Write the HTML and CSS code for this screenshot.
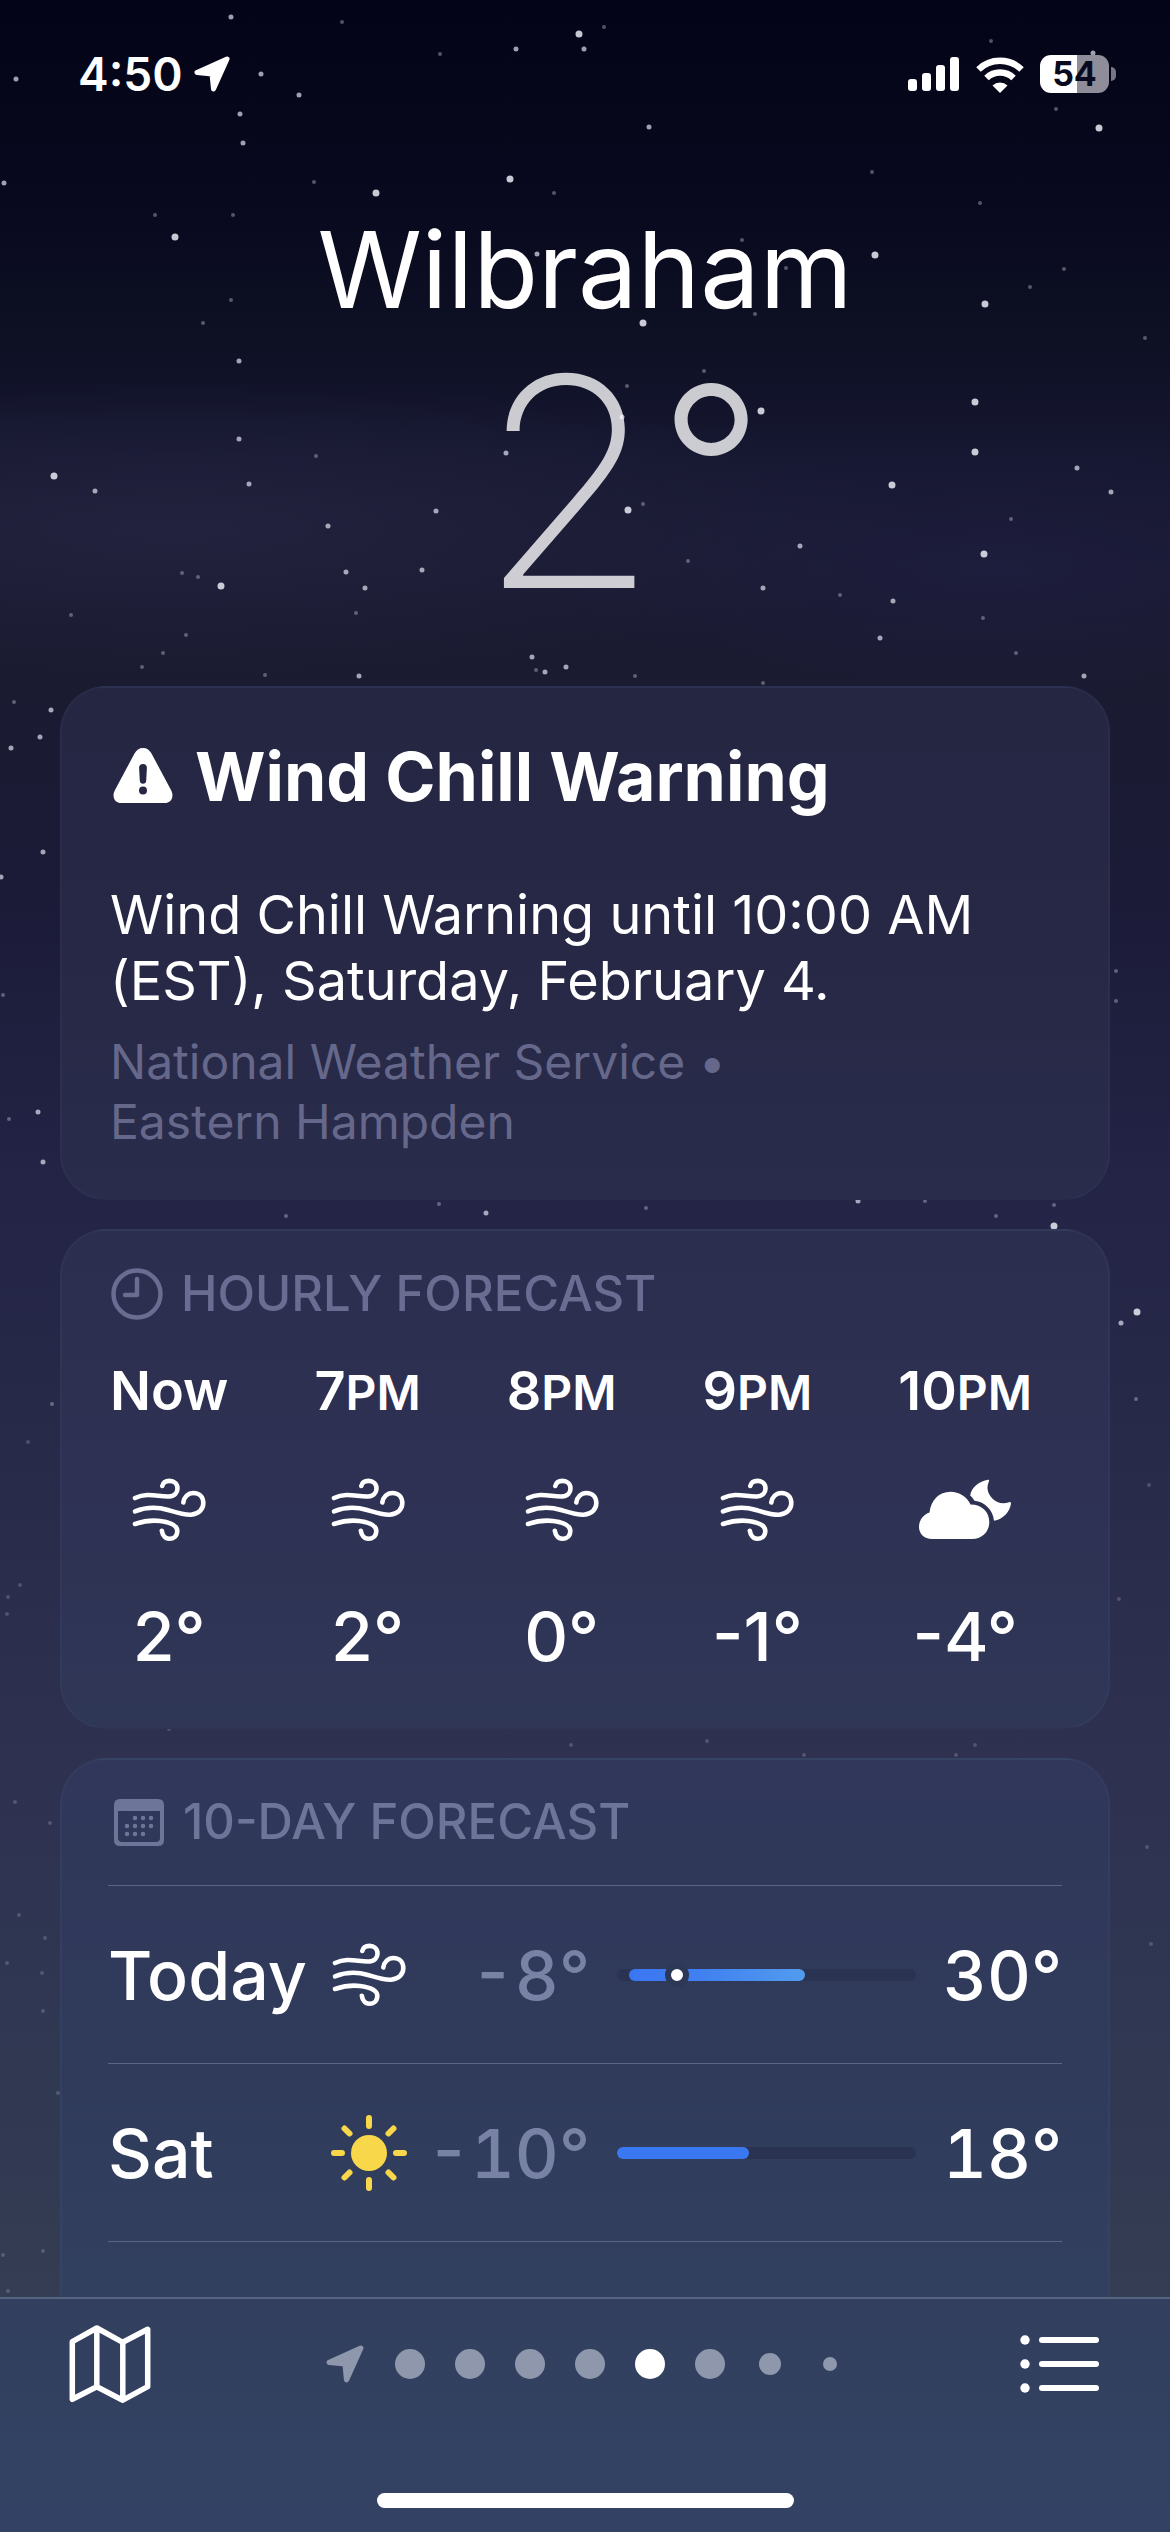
FILE: index.html
```html
<!DOCTYPE html>
<html lang="en">
<head>
    <meta charset="UTF-8">
    <meta name="viewport" content="width=device-width, initial-scale=1.0">
    <title>Weather</title>
    <link rel="stylesheet" href="styles.css">
</head>
<body>
    <!-- shared icons -->
    <svg class="sprite" aria-hidden="true">
        <symbol id="wind" viewBox="0 0 74 64">
            <g fill="none" stroke="currentColor" stroke-width="4.6" stroke-linecap="round" stroke-linejoin="round">
                <path d="M3 20C16 14 26 19 37 18.5C43 18 45.5 14 45.5 10.5C45.5 6 42 2.9 37.5 2.9C33.5 2.9 31 5 30.3 8"/>
                <path d="M3 33.3C14 29 26 29 36 32C46 35 52 37 59 36.7C67 36 71.3 31 71.3 25.3C71.3 19 67.5 15 61.5 15C56 15 52.3 19 51.3 24.5"/>
                <path d="M3 46C12 43 20 42 28 43C40 44.5 45.3 48 45.3 53C45.3 58 41.5 60.8 37.3 60.8C33 60.8 30.5 57 29.8 52.7"/>
            </g>
        </symbol>
        <symbol id="arrow" viewBox="0 0 38 38">
            <path d="M34 4L4 17.5L19 19L20.5 34Z" fill="currentColor" stroke="currentColor" stroke-width="5" stroke-linejoin="round"/>
        </symbol>
    </svg>

    <svg class="stars" viewBox="0 0 1170 2532" preserveAspectRatio="xMidYMin slice" aria-hidden="true">
        <path class="star-big" d="M579 34h0M376 193h0M510 179h0M175 237h0M875 255h0M985 304h0M643 323h0M761 411h0M975 402h0M975 452h0M54 476h0M892 485h0M628 510h0M984 554h0M221 586h0M1099 128h0M1054 1226h0M1137 1312h0"/>
        <path class="star-mid" d="M231 17h0M516 49h0M584 49h0M16 79h0M261 74h0M299 95h0M240 114h0M243 143h0M649 127h0M1093 53h0M4 183h0M537 254h0M239 361h0M622 417h0M239 439h0M506 453h0M1077 468h0M1111 492h0M95 491h0M249 484h0M436 511h0M328 526h0M800 546h0M346 572h0M422 570h0M365 588h0M763 588h0M893 601h0M880 638h0M532 657h0M359 676h0M545 672h0M566 667h0M1084 676h0M51 710h0M40 737h0M11 748h0M43 852h0M1 877h0M38 1112h0M43 1162h0M486 1213h0M858 1201h0M1121 1323h0"/>
        <path class="star-small" d="M342 22h0M604 27h0M440 54h0M991 41h0M1056 109h0M872 172h0M314 182h0M554 193h0M980 203h0M155 215h0M233 215h0M742 240h0M1064 269h0M1030 287h0M786 268h0M755 314h0M231 300h0M203 323h0M1145 338h0M704 371h0M627 386h0M316 456h0M643 504h0M1011 519h0M198 577h0M182 573h0M688 561h0M840 595h0M356 613h0M983 618h0M186 635h0M163 653h0M1016 653h0M71 615h0M142 667h0M265 675h0M536 670h0M635 676h0M763 683h0M14 702h0M1116 971h0M1116 1001h0M3 995h0M9 1119h0M439 1204h0M286 1216h0M646 1208h0M925 1201h0M1054 1205h0M996 1216h0M52 1404h0M1136 1399h0"/>
        <path class="star-faint" d="M28 1442h0M1149 1485h0M20 1585h0M8 1597h0M7 1614h0M1119 1599h0M169 1729h0M571 1745h0M707 1741h0M975 1745h0M804 1755h0M956 1755h0M1147 1847h0M15 1802h0M50 1823h0M19 1915h0M45 1938h0M7 1963h0M42 1973h0M43 2011h0M58 2093h0M1151 1944h0M3 2255h0M43 2251h0M8 2291h0"/>
    </svg>

    <div class="app">
        <div class="status-bar">
            <div class="status-left">
                <span>4:50</span>
                <svg class="status-arrow"><use href="#arrow"/></svg>
            </div>
            <div class="status-right">
                <svg class="signal" viewBox="0 0 52 36">
                    <g fill="#fff">
                        <rect x="0" y="23" width="9" height="12" rx="3"/>
                        <rect x="14" y="17" width="9" height="18" rx="3"/>
                        <rect x="28" y="9" width="9" height="26" rx="3"/>
                        <rect x="42" y="1" width="9" height="34" rx="3"/>
                    </g>
                </svg>
                <svg class="wifi" viewBox="0 0 50 37">
                    <g fill="none" stroke="#fff" stroke-width="6.5">
                        <path d="M3.5 13.5A31 31 0 0 1 46.5 13.5"/>
                        <path d="M11.5 22A19.5 19.5 0 0 1 38.5 22"/>
                    </g>
                    <path d="M25 37L17.5 29.5A11 11 0 0 1 32.5 29.5Z" fill="#fff"/>
                </svg>
                <div class="battery">
                    <span class="battery-level">54</span>
                </div>
            </div>
        </div>

        <main class="content">
            <header class="location">
                <h1 class="city">Wilbraham</h1>
                <div class="current-temp">2<span class="degree">°</span></div>
            </header>

            <section class="card alert">
                <h2 class="alert-title">
                    <svg class="warning" viewBox="0 0 60 56">
                        <path fill="#fff" fill-rule="evenodd" d="M30 0C34 0 36.5 2 38.5 5.5L58 42C61.5 48.5 58.5 55 51.5 55H8.5C1.5 55-1.5 48.5 2 42L21.5 5.5C23.5 2 26 0 30 0ZM30 16C27.5 16 26 17.7 26.1 20L26.8 32.5C26.9 34.7 28 35.8 30 35.8C32 35.8 33.1 34.7 33.2 32.5L33.9 20C34 17.7 32.5 16 30 16ZM30 38.5A4 4 0 1 0 30 46.5A4 4 0 1 0 30 38.5Z"/>
                    </svg>
                    Wind Chill Warning
                </h2>
                <p class="alert-text">Wind Chill Warning until 10:00 AM (EST), Saturday, February 4.</p>
                <p class="alert-source">National Weather Service •<br>Eastern Hampden</p>
            </section>

            <section class="card hourly">
                <h2 class="card-title">
                    <svg class="title-icon" viewBox="0 0 54 54">
                        <g fill="none" stroke="currentColor" stroke-width="4.5" stroke-linecap="round" stroke-linejoin="round">
                            <circle cx="27" cy="27" r="23.5"/>
                            <path d="M27 12V28H15"/>
                        </g>
                    </svg>
                    HOURLY FORECAST
                </h2>
                <div class="hours">
                    <div class="hour">
                        <span class="hour-time">Now</span>
                        <svg class="wind"><use href="#wind"/></svg>
                        <span class="hour-temp">2°</span>
                    </div>
                    <div class="hour">
                        <span class="hour-time">7<small>PM</small></span>
                        <svg class="wind"><use href="#wind"/></svg>
                        <span class="hour-temp">2°</span>
                    </div>
                    <div class="hour">
                        <span class="hour-time">8<small>PM</small></span>
                        <svg class="wind"><use href="#wind"/></svg>
                        <span class="hour-temp">0°</span>
                    </div>
                    <div class="hour">
                        <span class="hour-time">9<small>PM</small></span>
                        <svg class="wind"><use href="#wind"/></svg>
                        <span class="hour-temp">-1°</span>
                    </div>
                    <div class="hour">
                        <span class="hour-time">10<small>PM</small></span>
                        <svg class="cloud-moon" viewBox="0 0 94 64">
                            <g fill="#fff">
                                <path d="M14 61C6 61 1 55.5 1 49C1 42 5.5 36.5 11.5 34.5C13 22 21 13.7 32.5 13.7C41 13.7 49 18.5 52.5 26.5C64 26.5 71.3 34 71.3 44C71.3 54 64 61 54 61Z"/>
                                <path d="M70.3 1.7C61 3 53 9.5 52.2 17.5C54 19 55.5 21 56.5 22.8C67 24 75 32 76 42.8C85 41.5 92 33.5 93 25.5C93 24 92 23.6 91 24.2C80 28.5 70 19 69.5 10.5C69.3 7 70.5 5 71 3C71.3 2 71 1.6 70.3 1.7Z"/>
                            </g>
                        </svg>
                        <span class="hour-temp">-4°</span>
                    </div>
                </div>
            </section>

            <section class="card daily">
                <h2 class="card-title">
                    <svg class="title-icon" viewBox="0 0 54 54">
                        <path fill="currentColor" fill-rule="evenodd" d="M8 4H46Q52 4 52 10V45Q52 51 46 51H8Q2 51 2 45V10Q2 4 8 4ZM6 16V43Q6 47 10 47H44Q48 47 48 43V16Z"/>
                        <path fill="none" stroke="currentColor" stroke-width="4.5" stroke-linecap="round" d="M23 23h0M31 23h0M39 23h0M15 31h0M23 31h0M31 31h0M39 31h0M15 39h0M23 39h0M31 39h0"/>
                    </svg>
                    10-DAY FORECAST
                </h2>
                <ul class="days">
                    <li class="day">
                        <span>Today</span>
                        <svg class="wind"><use href="#wind"/></svg>
                        <span class="low">-8°</span>
                        <span class="range">
                            <span class="range-fill warm" style="margin-left: 4%; width: 59%"></span>
                            <span class="range-now" style="left: 20%"></span>
                        </span>
                        <span class="high">30°</span>
                    </li>
                    <li class="day">
                        <span>Sat</span>
                        <svg class="sun" viewBox="0 0 78 78">
                            <circle cx="39" cy="39" r="18" fill="#f8d74a"/>
                            <path stroke="#f8d74a" stroke-width="6" stroke-linecap="round" d="M39 4V12M39 66V74M4 39H12M66 39H74M14.5 14.5L19.5 19.5M58.5 58.5L63.5 63.5M14.5 63.5L19.5 58.5M58.5 19.5L63.5 14.5"/>
                        </svg>
                        <span class="low">-10°</span>
                        <span class="range">
                            <span class="range-fill" style="width: 44%"></span>
                        </span>
                        <span class="high">18°</span>
                    </li>
                </ul>
            </section>
        </main>

        <footer class="tab-bar">
            <div class="tabs">
                <button class="tab" type="button" aria-label="Map">
                    <svg class="map" viewBox="0 0 81 78">
                        <path fill="none" stroke="#fff" stroke-width="5.5" stroke-linejoin="round" d="M2.8 16.7L27.3 3L53.3 17.3L78.2 4.3V61.7L53.3 75.2L27.3 61.7L2.8 74.3ZM27.3 3V61.7M53.3 17.3V75.2"/>
                    </svg>
                </button>
                <div class="pages">
                    <svg class="page-arrow"><use href="#arrow"/></svg>
                    <span class="dot"></span>
                    <span class="dot"></span>
                    <span class="dot"></span>
                    <span class="dot"></span>
                    <span class="dot active"></span>
                    <span class="dot"></span>
                    <span class="dot medium"></span>
                    <span class="dot small"></span>
                </div>
                <button class="tab" type="button" aria-label="Locations">
                    <svg class="list" viewBox="0 0 80 60">
                        <path fill="none" stroke="#fff" stroke-width="6" stroke-linecap="round" d="M22 6H76M22 30H76M22 54H76"/>
                        <g fill="#fff">
                            <circle cx="5" cy="6" r="4.7"/>
                            <circle cx="5" cy="30" r="4.7"/>
                            <circle cx="5" cy="54" r="4.7"/>
                        </g>
                    </svg>
                </button>
            </div>
            <div class="home-indicator"></div>
        </footer>
    </div>
</body>
</html>
```

FILE: styles.css
```css
* {
    box-sizing: border-box;
}

body {
    margin: 0;
    font-family: Inter, "Liberation Sans", sans-serif;
    color: #fff;
    background:
        radial-gradient(ellipse 65% 150px at 15% 530px, rgba(38, 37, 66, 0.8), rgba(34, 33, 64, 0)),
        radial-gradient(ellipse 40% 130px at 85% 570px, rgba(31, 31, 66, 0.7), rgba(31, 31, 66, 0)),
        linear-gradient(#040418 0, #08091e 200px, #0e1024 340px, #161731 460px, #1a1a30 660px, #1b1b38 900px, #232446 1180px, #282a49 1450px, #2e3050 1720px, #2f3752 2000px, #343d53 2300px);
    background-color: #334060;
}

h1, h2, p, ul {
    margin: 0;
    padding: 0;
    font-weight: 400;
}

.sprite {
    position: absolute;
    width: 0;
    height: 0;
}

/* night sky */
.stars {
    position: absolute;
    top: 0;
    left: 0;
    width: 100%;
    height: 100vh;
    z-index: -1;
    fill: none;
    stroke-linecap: round;
}

.star-big { stroke: rgba(235, 235, 245, 0.85); stroke-width: 7; }
.star-mid { stroke: rgba(225, 225, 240, 0.7); stroke-width: 5; }
.star-small { stroke: rgba(200, 200, 220, 0.4); stroke-width: 4; }
.star-faint { stroke: rgba(190, 195, 215, 0.25); stroke-width: 4; }

.app {
    display: flex;
    flex-direction: column;
    height: 100vh;
}

/* status bar */
.status-bar {
    display: flex;
    justify-content: space-between;
    align-items: center;
    height: 148px;
    padding: 0 54px 0 78px;
}

.status-left {
    display: flex;
    align-items: center;
    gap: 10px;
    font-size: 46px;
    font-weight: 600;
}

.status-arrow {
    width: 38px;
    height: 38px;
}

.status-right {
    display: flex;
    align-items: center;
    gap: 15px;
}

.signal { width: 52px; height: 36px; }
.wifi { width: 50px; height: 37px; }

.battery {
    position: relative;
    width: 69px;
    height: 38px;
    margin-right: 7px;
    border-radius: 11px;
    background: linear-gradient(90deg, #fff 54%, #8e8d99 54%);
    text-align: center;
}

.battery::after {
    content: "";
    position: absolute;
    top: 12px;
    right: -7px;
    width: 5px;
    height: 14px;
    border-radius: 0 7px 7px 0;
    background: #777683;
}

.battery-level {
    font-size: 34px;
    line-height: 38px;
    font-weight: 700;
    color: #0a0a1e;
}

/* main column */
.content {
    flex: 1;
    min-height: 0;
    display: flex;
    flex-direction: column;
    gap: 29px;
    padding: 0 60px;
    overflow: hidden;
}

.location {
    height: 509px;
    padding-top: 52px;
    text-align: center;
}

.city {
    font-size: 106px;
    line-height: 140px;
}

.current-temp {
    padding-left: 72px;
    font-size: 292px;
    line-height: 284px;
    font-weight: 250;
    color: rgba(255, 255, 255, 0.78);
}

.degree {
    font-size: 230px;
    line-height: 0;
    font-weight: 300;
    vertical-align: 36px;
}

.card {
    padding: 0 48px;
    border: 2px solid rgba(120, 130, 190, 0.06);
    border-radius: 46px;
}

/* weather alert */
.alert {
    height: 514px;
    padding-top: 44px;
    background: linear-gradient(#252642, #272846 50%, #292c4b);
}

.alert-title {
    display: flex;
    align-items: center;
    gap: 22px;
    padding-left: 3px;
    font-size: 68px;
    line-height: 88px;
    font-weight: 700;
}

.warning {
    width: 60px;
    height: 56px;
}

.alert-text {
    margin-top: 62px;
    font-size: 54px;
    line-height: 66px;
}

.alert-source {
    margin-top: 18px;
    font-size: 48px;
    line-height: 60px;
    color: #66688b;
}

.card-title {
    display: flex;
    align-items: center;
    gap: 17px;
    font-size: 49px;
    line-height: 60px;
    font-weight: 500;
    color: #6a6c91;
}

.title-icon {
    width: 54px;
    height: 54px;
}

/* hourly forecast */
.hourly {
    height: 500px;
    padding-top: 33px;
    background: linear-gradient(#2c2e4f, #2e3153 50%, #2f3757);
}

.hours {
    display: flex;
    gap: 86px;
    margin-top: 34px;
}

.hour {
    display: flex;
    flex-direction: column;
    align-items: center;
}

.hour-time {
    font-size: 54px;
    line-height: 66px;
    font-weight: 600;
    white-space: nowrap;
}

.hour-time small {
    font-size: 48px;
    line-height: 1;
}

.wind {
    width: 74px;
    height: 64px;
}

.hour .wind, .cloud-moon {
    margin: 54px 0;
}

.cloud-moon {
    width: 94px;
    height: 64px;
}

.hour-temp {
    font-size: 68px;
    line-height: 80px;
    font-weight: 500;
}

/* 10-day forecast */
.daily {
    flex: 1;
    padding: 32px 46px 0;
    border-bottom: 0;
    border-radius: 46px 46px 0 0;
    background: linear-gradient(#30375a, #303b5b 60%, #32405f);
}

.daily .card-title {
    padding-left: 4px;
    color: #6d7598;
}

.days {
    margin-top: 33px;
    border-bottom: 1px solid #5b6583;
    list-style: none;
}

.day {
    display: grid;
    grid-template-columns: 222px 78px 182px 1fr 119px;
    align-items: center;
    height: 178px;
    border-top: 1px solid #5b6583;
    font-size: 68px;
    font-weight: 500;
    font-variant-numeric: tabular-nums;
}

.day .wind {
    justify-self: center;
}

.sun {
    width: 78px;
    height: 78px;
}

.low, .high {
    text-align: right;
}

.low {
    color: #7882a5;
}

.range {
    position: relative;
    height: 12px;
    margin: 0 27px;
    border-radius: 6px;
    background: #2a3351;
}

.range-fill {
    display: block;
    height: 12px;
    border-radius: 6px;
    background: #3a78f2;
}

.range-fill.warm {
    background: linear-gradient(90deg, #3a76f2, #4080f0 40%, #529cee);
}

/* current temperature marker */
.range-now {
    position: absolute;
    top: -6px;
    width: 24px;
    height: 24px;
    margin-left: -12px;
    border: 6px solid #2d3856;
    border-radius: 50%;
    background: #fff;
}

/* bottom bar */
.tab-bar {
    height: 235px;
    padding: 26px 68px 24px;
    display: flex;
    flex-direction: column;
    justify-content: space-between;
    border-top: 2px solid #566480;
    background: linear-gradient(#323f5e, #334264);
}

.tabs {
    display: flex;
    justify-content: space-between;
    align-items: center;
}

.tab {
    display: flex;
    padding: 0;
    border: 0;
    background: none;
    cursor: pointer;
}

.map {
    width: 84px;
    height: 78px;
}

.list {
    width: 84px;
    height: 60px;
}

.pages {
    display: flex;
    align-items: center;
    gap: 30px;
    color: #8e97ac;
}

.page-arrow {
    width: 40px;
    height: 40px;
}

.dot {
    width: 30px;
    height: 30px;
    border-radius: 50%;
    background: #8e97ac;
}

.dot.active {
    background: #fff;
}

.dot.medium {
    width: 22px;
    height: 22px;
    margin: 0 4px;
}

.dot.small {
    width: 14px;
    height: 14px;
    margin: 0 8px;
}

.home-indicator {
    align-self: center;
    width: 42%;
    max-width: 417px;
    height: 15px;
    border-radius: 8px;
    background: #fff;
}
```
